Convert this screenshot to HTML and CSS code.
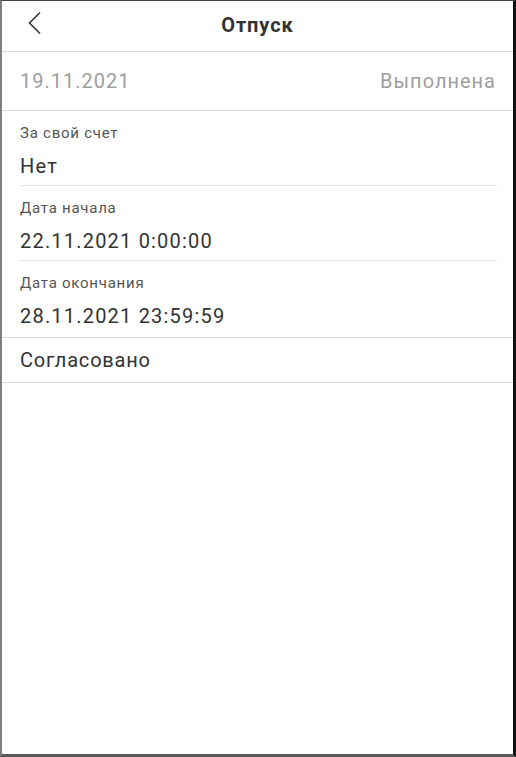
FILE: index.html
```html
<!DOCTYPE html>
<html lang="ru">
<head>
    <meta charset="UTF-8">
    <title>Отпуск</title>
    <link rel="stylesheet" href="styles.css">
</head>
<body>
    <div class="screen">
        <header class="bar">
            <a class="bar__back" href="#">
                <svg width="16" height="24" viewBox="0 0 16 24">
                    <path d="M13 1.5 L2.5 12 L13 22.5" fill="none" stroke="#3a3a3a" stroke-width="1.7"/>
                </svg>
            </a>
            <h1 class="bar__title">Отпуск</h1>
        </header>
        <div class="status">
            <span>19.11.2021</span>
            <span>Выполнена</span>
        </div>
        <div class="fields">
            <div class="field">
                <div class="field__label">За свой счет</div>
                <div class="field__value">Нет</div>
            </div>
            <div class="field">
                <div class="field__label">Дата начала</div>
                <div class="field__value">22.11.2021 0:00:00</div>
            </div>
            <div class="field">
                <div class="field__label">Дата окончания</div>
                <div class="field__value">28.11.2021 23:59:59</div>
            </div>
        </div>
        <div class="state">Согласовано</div>
    </div>
</body>
</html>
```
FILE: styles.css
```css
html, body{
    margin: 0;
    padding: 0;
    background: #fff;
}
.screen{
    box-sizing: border-box;
    width: 516px;
    height: 757px;
    border-top: 1px solid #444;
    border-left: 2px solid #7f7f7f;
    border-right: 3px solid #111;
    border-bottom: 3px solid #5a5a5a;
    font-family: Roboto, "Noto Sans", sans-serif;
    color: #333;
}
.bar{
    position: relative;
    height: 50px;
    display: flex;
    align-items: center;
    justify-content: center;
    border-bottom: 1px solid #dcdcdc;
}
.bar__back{
    position: absolute;
    left: 25px;
    top: 10px;
    display: block;
    line-height: 0;
}
.bar__title{
    margin: 0 0 2px;
    font-size: 20px;
    font-weight: bold;
    letter-spacing: 0.9px;
    color: #333;
}
.status{
    height: 58px;
    display: flex;
    align-items: center;
    justify-content: space-between;
    padding: 0 17px 0 18px;
    border-bottom: 1px solid #dcdcdc;
    color: #9e9e9e;
    font-size: 20px;
    letter-spacing: 1px;
}
.fields{
    padding: 0 16px 1px 18px;
    border-bottom: 1px solid #dcdcdc;
}
.field{
    height: 75px;
    box-sizing: border-box;
    padding-top: 13px;
    border-bottom: 1px solid #e4e4e4;
}
.field:last-child{
    border-bottom: none;
}
.field__label{
    font-size: 15px;
    line-height: 18px;
    color: #555;
    letter-spacing: 0.75px;
}
.field__value{
    margin-top: 12px;
    font-size: 20px;
    line-height: 24px;
    letter-spacing: 1.2px;
}
.state{
    height: 44px;
    display: flex;
    align-items: center;
    padding: 0 18px;
    border-bottom: 1px solid #dcdcdc;
    font-size: 20px;
    letter-spacing: 0.8px;
}
```
